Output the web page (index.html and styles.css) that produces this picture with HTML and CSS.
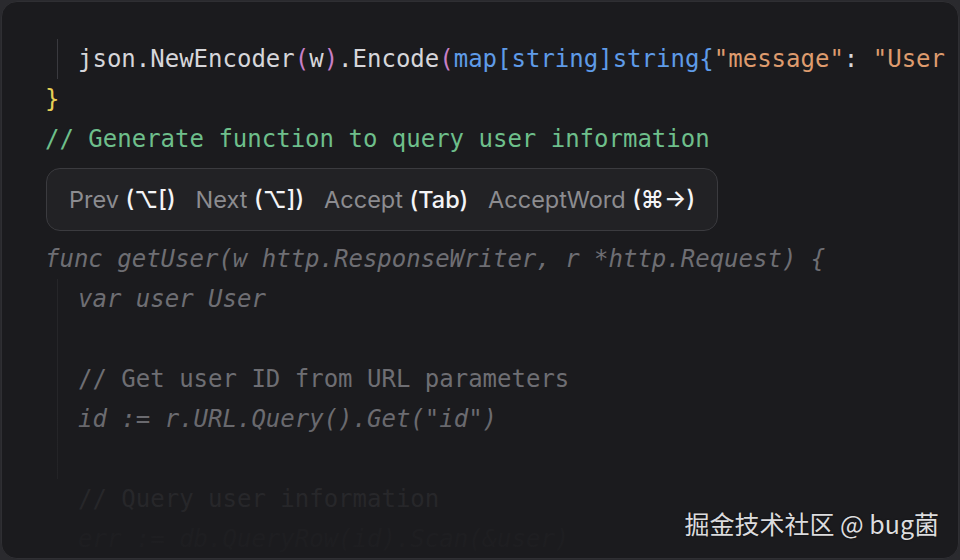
FILE: index.html
```html
<!DOCTYPE html>
<html>
<head>
<meta charset="utf-8">
<link rel="stylesheet" href="styles.css">
</head>
<body>
<div class="card">
  <div class="code">
    <div class="indent guide">
      <div class="line">json.NewEncoder<span class="paren">(</span>w<span class="paren">)</span>.Encode<span class="paren">(</span><span class="type">map[string]string{</span><span class="str">"message"</span>: <span class="str">"User</span></div>
    </div>
    <div class="line"><span class="brace">}</span></div>
    <div class="line comment">// Generate function to query user information</div>
    <div class="popup-row">
      <div class="popup">
        <span class="item"><span class="label">Prev</span> <span class="key">(⌥[)</span></span>
        <span class="item"><span class="label">Next</span> <span class="key">(⌥])</span></span>
        <span class="item"><span class="label">Accept</span> <span class="key">(Tab)</span></span>
        <span class="item"><span class="label">AcceptWord</span> <span class="key">(⌘→)</span></span>
      </div>
    </div>
    <div class="line ghost it">func getUser(w http.ResponseWriter, r *http.Request) {</div>
    <div class="indent guide faint">
      <div class="line ghost it">var user User</div>
      <div class="line"> </div>
      <div class="line ghost">// Get user ID from URL parameters</div>
      <div class="line ghost it">id := r.URL.Query().Get("id")</div>
      <div class="line"> </div>
    </div>
    <div class="indent">
      <div class="line ghost2">// Query user information</div>
      <div class="line ghost3 it">err := db.QueryRow(id).Scan(&amp;user)</div>
    </div>
  </div>
  <div class="fade"></div>
  <div class="watermark">掘金技术社区 @ bug菌</div>
</div>
</body>
</html>
```
FILE: styles.css
```css
html, body {
  margin: 0;
  padding: 0;
  background: #2a2a2e;
  width: 960px;
  height: 560px;
  overflow: hidden;
}
.card {
  position: relative;
  box-sizing: border-box;
  width: 958px;
  height: 558px;
  margin: 1px;
  background: #1b1b1e;
  border: 1px solid #2f2f33;
  border-radius: 16px;
  overflow: hidden;
}
.code {
  padding: 37px 0 0 43px;
  font-family: "DejaVu Sans Mono", "Liberation Mono", monospace;
  font-size: 24px;
  color: #d6d6da;
}
.line {
  height: 40px;
  line-height: 40px;
  white-space: pre;
}
.indent {
  margin-left: 12px;
  padding-left: 20px;
  border-left: 1px solid transparent;
}
.guide {
  border-left-color: #3a3a3f;
}
.guide.faint {
  border-left-color: #262629;
}
.paren { color: #c77fc6; }
.type { color: #5f9be8; }
.str { color: #de9b6e; }
.brace { color: #e6cf56; }
.comment { color: #6ebf8b; }
.ghost { color: #6e6e73; }
.ghost2 { color: #2e2e31; }
.ghost3 { color: #212124; }
.it { font-style: italic; }
.popup-row {
  height: 80px;
  display: flex;
  align-items: center;
}
.popup {
  margin-left: 1px;
  box-sizing: border-box;
  height: 63px;
  padding: 0 22px;
  display: flex;
  align-items: center;
  gap: 20px;
  background: #222225;
  border: 1px solid #3b3b3f;
  border-radius: 14px;
  font-family: Inter, "Noto Sans", "DejaVu Sans", sans-serif;
  font-size: 23.5px;
  white-space: nowrap;
}
.label { color: #8c8c90; }
.key { color: #f4f4f6; font-weight: 500; }
.fade {
  position: absolute;
  left: 0;
  right: 0;
  bottom: 0;
  height: 150px;
  background: linear-gradient(to bottom, rgba(27,27,30,0) 0%, rgba(27,27,30,0.6) 100%);
}
.watermark {
  position: absolute;
  right: 19px;
  bottom: 17px;
  font-family: "Noto Sans CJK SC", "Noto Sans", sans-serif;
  font-size: 25px;
  color: #dcdcde;
  text-shadow: 0 0 2px rgba(0,0,0,0.6);
}
```
